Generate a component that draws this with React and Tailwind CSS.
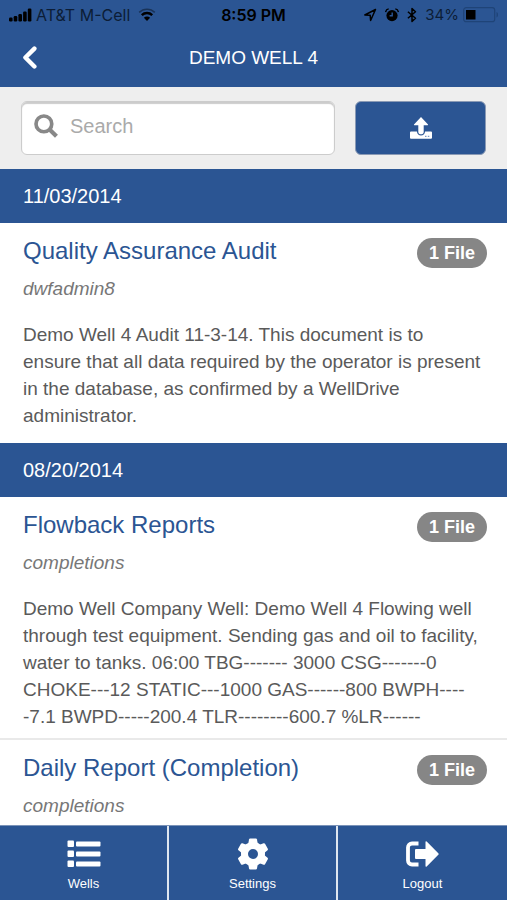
import React from 'react';

const REPORTS = [
  {
    date: '11/03/2014',
    items: [
      {
        title: 'Quality Assurance Audit',
        author: 'dwfadmin8',
        files: '1 File',
        text: 'Demo Well 4 Audit 11-3-14. This document is to ensure that all data required by the operator is present in the database, as confirmed by a WellDrive administrator.',
      },
    ],
  },
  {
    date: '08/20/2014',
    items: [
      {
        title: 'Flowback Reports',
        author: 'completions',
        files: '1 File',
        text: 'Demo Well Company Well: Demo Well 4 Flowing well through test equipment. Sending gas and oil to facility, water to tanks. 06:00 TBG------- 3000 CSG-------0 CHOKE---12 STATIC---1000 GAS------800 BWPH-----7.1 BWPD-----200.4 TLR--------600.7 %LR------',
      },
      { title: 'Daily Report (Completion)', author: 'completions', files: '1 File' },
    ],
  },
];

function SignalIcon() {
  return (
    <svg viewBox="0 0 24 14" className="w-6 h-3.5" fill="currentColor" aria-hidden="true">
      <rect x="1" y="9.5" width="3.6" height="4" rx="1.2" />
      <rect x="5.7" y="8" width="3.6" height="5.5" rx="1.2" />
      <rect x="10.4" y="6" width="3.6" height="7.5" rx="1.2" />
      <rect x="15.1" y="3.5" width="3.6" height="10" rx="1.2" />
      <rect x="19.8" y="0.5" width="3.6" height="13" rx="1.2" />
    </svg>
  );
}

function WifiIcon() {
  return (
    <svg viewBox="0 0 18 14" className="w-4.5 h-3.5" fill="none" stroke="currentColor" aria-hidden="true">
      <path d="M1.2 4.4a11.2 11.2 0 0 1 15.6 0" strokeWidth="1.6" opacity="0.4" />
      <path d="M3.8 7.1a7.4 7.4 0 0 1 10.4 0" strokeWidth="2.4" />
      <path d="M9 13 5.9 9.8a4.4 4.4 0 0 1 6.2 0z" fill="currentColor" stroke="none" />
    </svg>
  );
}

function LocationIcon() {
  return (
    <svg viewBox="0 0 14 14" className="w-3.5 h-3.5" fill="none" stroke="currentColor" strokeWidth="1.5" strokeLinejoin="round" aria-hidden="true">
      <path d="M12.5 1.5 1.8 7l5.4.2.4 5.3z" />
    </svg>
  );
}

function AlarmIcon() {
  return (
    <svg viewBox="0 0 14 14" className="w-3.5 h-3.5" fill="currentColor" aria-hidden="true">
      <circle cx="7" cy="7.6" r="5.6" />
      <path d="M.6 4.2C.8 2.6 2 1.2 3.7.9M13.4 4.2C13.2 2.6 12 1.2 10.3.9" fill="none" stroke="currentColor" strokeWidth="1.4" />
      <path d="M7.2 4.5v3.3H4.6" fill="none" stroke="#2b5593" strokeWidth="1.4" />
    </svg>
  );
}

function BluetoothIcon() {
  return (
    <svg viewBox="0 0 10 15" className="w-2.5 h-4" fill="none" stroke="currentColor" strokeWidth="1.5" strokeLinejoin="round" aria-hidden="true">
      <path d="m.9 4.2 7.6 6.6L5 13.9V1.1l3.5 3.1-7.6 6.6" />
    </svg>
  );
}

function BatteryIcon() {
  return (
    <svg viewBox="0 0 36 16" className="w-9 h-4" aria-hidden="true">
      <rect x="0.7" y="0.7" width="31" height="14" rx="2.5" fill="none" stroke="#1f4478" strokeWidth="1.2" />
      <rect x="3" y="3" width="9.5" height="9.5" fill="#000" />
      <path d="M33.5 5v5.5c2-.6 2-4.9 0-5.5z" fill="#1f4478" />
    </svg>
  );
}

function BackIcon() {
  return (
    <svg viewBox="0 0 16 24" className="w-4 h-6" fill="none" stroke="currentColor" strokeWidth="4.4" strokeLinecap="round" strokeLinejoin="round" aria-hidden="true">
      <path d="M12.4 2.6 3.4 11.5l9 9" />
    </svg>
  );
}

function SearchIcon() {
  return (
    <svg viewBox="0 0 25 25" className="w-6 h-6" fill="none" stroke="currentColor" strokeWidth="3.8" aria-hidden="true">
      <circle cx="10.3" cy="10.3" r="8.2" />
      <path d="m16.2 16.2 7.2 7" strokeWidth="4.4" />
    </svg>
  );
}

function UploadIcon() {
  return (
    <svg viewBox="0 0 22 22" className="w-5.5 h-5.5" fill="currentColor" aria-hidden="true">
      <path d="M11 0 18 7.6q.3.6-.4.6h-3.9V15c0 1.6-1.2 2.3-2.7 2.3S8.3 16.6 8.3 15V8.2H4.4q-.7 0-.4-.6z" />
      <path d="M1 14.6h5.9c.3 2.5 1.9 4 4.1 4s3.8-1.5 4.1-4H21q1 0 1 1v5.2q0 1-1 1H1q-1 0-1-1v-5.2q0-1 1-1z" />
      <path d="M15 19.4h1.5m1.3 0h1.5" stroke="#7f9bc4" strokeWidth="1.3" />
    </svg>
  );
}

function ListIcon() {
  return (
    <svg viewBox="0 0 34 28" className="w-8.5 h-7" fill="currentColor" aria-hidden="true">
      <rect x="0.5" y="0.5" width="6.5" height="6.5" rx="1" />
      <rect x="0.5" y="10.5" width="6.5" height="6.5" rx="1" />
      <rect x="0.5" y="20.5" width="6.5" height="6.5" rx="1" />
      <rect x="9" y="1.5" width="24.5" height="5" rx="1" />
      <rect x="9" y="11.5" width="24.5" height="5" rx="1" />
      <rect x="9" y="21.5" width="24.5" height="5" rx="1" />
    </svg>
  );
}

function GearIcon() {
  return (
    <svg viewBox="-16 -16 32 32" className="w-8 h-8" fill="currentColor" aria-hidden="true">
      <circle r="8.5" fill="none" stroke="currentColor" strokeWidth="7" />
      {[0, 60, 120, 180, 240, 300].map((angle) => (
        <path key={angle} transform={`rotate(${angle})`} d="M-5-9l1-5.5q.2-1 1.2-1h5.6q1 0 1.2 1L5-9z" />
      ))}
    </svg>
  );
}

function LogoutIcon() {
  return (
    <svg viewBox="0 0 34 26" className="w-8.5 h-6.5" aria-hidden="true">
      <path d="M12.5 2.5H6a4 4 0 0 0-4 4v13a4 4 0 0 0 4 4h6.5" fill="none" stroke="currentColor" strokeWidth="3.8" />
      <path d="M19.5 1.2q0-1.4 1.2-.6L32.3 12.2q.8.8 0 1.6L20.7 25.4q-1.2.8-1.2-.6V18H10q-1 0-1-1V9q0-1 1-1h9.5z" fill="currentColor" />
    </svg>
  );
}

const TABS = [
  { label: 'Wells', Icon: ListIcon },
  { label: 'Settings', Icon: GearIcon },
  { label: 'Logout', Icon: LogoutIcon },
];

function StatusBar() {
  return (
    <div className="h-7 px-2 pt-0.5 grid grid-cols-[1fr_auto_1fr] items-center text-base text-black font-[Inter,sans-serif]">
      <div className="flex items-center gap-1">
        <SignalIcon />
        <span className="text-[#0c1d36] whitespace-nowrap">AT&amp;T M-Cell</span>
        <span className="ml-1"><WifiIcon /></span>
      </div>
      <span className="font-semibold">8:59 PM</span>
      <div className="flex items-center justify-end gap-2">
        <LocationIcon />
        <AlarmIcon />
        <BluetoothIcon />
        <div className="flex items-center gap-1">
          <span className="text-[15px] text-[#0c1d36]">34%</span>
          <BatteryIcon />
        </div>
      </div>
    </div>
  );
}

function ReportItem({ item }) {
  return (
    <article className="pl-[23px] pr-5 pt-[11px] pb-2 last:pb-3.5 border-b-2 border-[#e9e9e9] last:border-b-0">
      <div className="flex items-end justify-between">
        <h3 className="text-2xl leading-[34px] text-[#2b5593]">{item.title}</h3>
        <span className="h-[30px] px-3 rounded-full bg-[#868686] text-white text-lg leading-[30px] font-bold whitespace-nowrap">
          {item.files}
        </span>
      </div>
      <p className="mt-[7px] text-[19px] leading-[27px] italic text-[#777]">{item.author}</p>
      {item.text && <p className="mt-[19px] pr-1 text-[19px] leading-[27px] text-[#5a5a5a]">{item.text}</p>}
    </article>
  );
}

export default function App() {
  return (
    <div className="h-screen flex flex-col bg-white font-['Liberation_Sans',Arial,sans-serif]">
      <header className="shrink-0 bg-[#2b5593] text-white">
        <StatusBar />
        <div className="h-[59px] pt-px px-[22px] grid grid-cols-[1fr_auto_1fr] items-center">
          <button type="button" aria-label="Back" className="justify-self-start">
            <BackIcon />
          </button>
          <h1 className="text-[19px]">DEMO WELL 4</h1>
        </div>
      </header>

      <div className="shrink-0 flex gap-5 px-[21px] py-3.5 bg-[#eee]">
        <label className="flex-1 min-w-0 h-[54px] flex items-center gap-3 px-3 pb-1 bg-white border border-[#ccc] rounded-md shadow-[inset_0_2px_1px_#ccc]">
          <span className="text-[#888]"><SearchIcon /></span>
          <input
            type="search"
            aria-label="Search"
            placeholder="Search"
            className="flex-1 min-w-0 bg-transparent outline-none text-xl text-[#555] placeholder:text-[#aaa]"
          />
        </label>
        <button
          type="button"
          aria-label="Upload"
          className="w-[131px] h-[54px] flex items-center justify-center rounded-md border border-[#8a9ab5] bg-[#2b5593] text-white"
        >
          <UploadIcon />
        </button>
      </div>

      <main className="flex-1 min-h-0 overflow-y-auto [scrollbar-width:none]">
        {REPORTS.map((group) => (
          <section key={group.date}>
            <h2 className="h-[54px] px-[23px] bg-[#2b5593] text-white text-xl leading-[54px]">{group.date}</h2>
            {group.items.map((item) => (
              <ReportItem key={item.title} item={item} />
            ))}
          </section>
        ))}
      </main>

      <nav className="shrink-0 h-[75px] grid grid-cols-3 bg-[#2b5593] border-t border-[#7b93b8] text-white divide-x-2 divide-[#dfe6f0]">
        {TABS.map(({ label, Icon }) => (
          <button key={label} type="button" className="flex flex-col items-center pt-3">
            <span className="h-8 flex items-center"><Icon /></span>
            <span className="mt-1 text-[13px] leading-5">{label}</span>
          </button>
        ))}
      </nav>
    </div>
  );
}
